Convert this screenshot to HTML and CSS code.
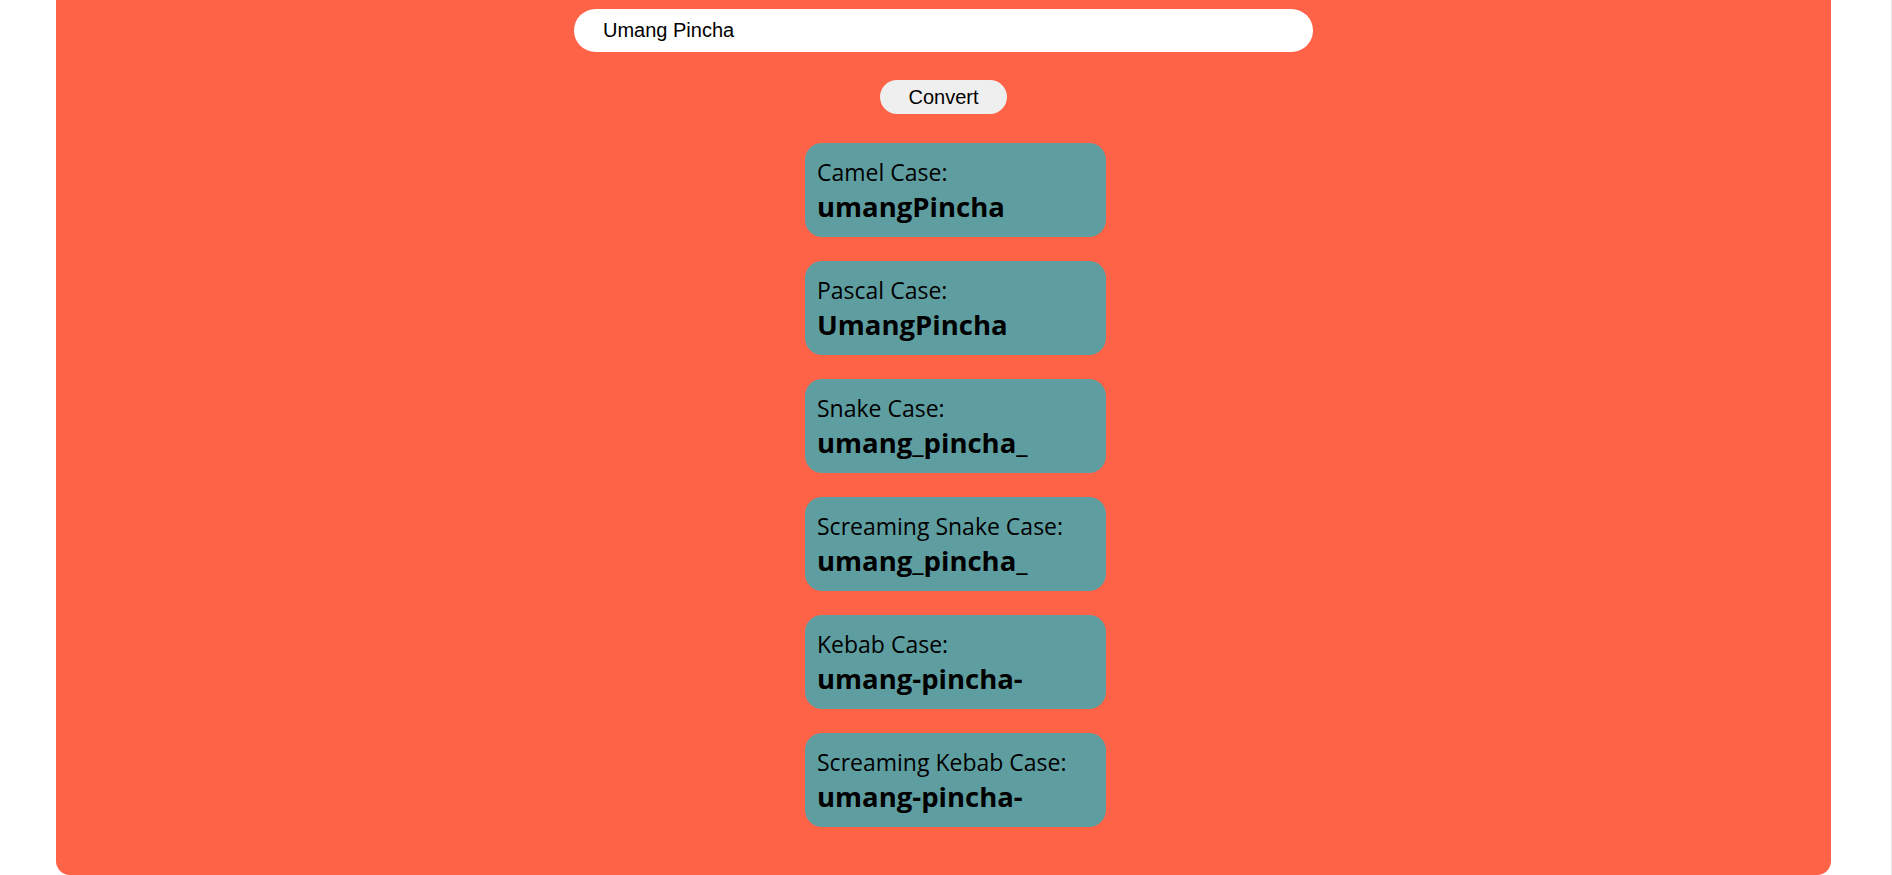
FILE: index.html
```html
<!DOCTYPE html>
<html lang="en">
<head>
<meta charset="utf-8">
<title>Case Converter</title>
<link rel="stylesheet" href="styles.css">
</head>
<body>
<main class="panel">
  <input class="text-input" type="text" value="Umang Pincha">
  <button class="convert-btn" type="button">Convert</button>
  <section class="results">
    <div class="card"><div class="label">Camel Case:</div><div class="value">umangPincha</div></div>
    <div class="card"><div class="label">Pascal Case:</div><div class="value">UmangPincha</div></div>
    <div class="card"><div class="label">Snake Case:</div><div class="value">umang_pincha_</div></div>
    <div class="card"><div class="label">Screaming Snake Case:</div><div class="value">umang_pincha_</div></div>
    <div class="card"><div class="label">Kebab Case:</div><div class="value">umang-pincha-</div></div>
    <div class="card"><div class="label">Screaming Kebab Case:</div><div class="value">umang-pincha-</div></div>
  </section>
</main>
</body>
</html>
```
FILE: styles.css
```css
html, body {
  margin: 0;
  padding: 0;
  background: #ffffff;
}
body {
  min-height: 875px;
  box-shadow: inset -1px 0 0 #e6e6e6;
}
.panel {
  box-sizing: border-box;
  width: 1775px;
  height: 875px;
  margin-left: 56px;
  background: #ff6347;
  border-radius: 0 0 14px 14px;
  padding-top: 9px;
  display: flex;
  flex-direction: column;
  align-items: center;
}
.text-input {
  box-sizing: border-box;
  width: 739px;
  height: 43px;
  border: none;
  outline: none;
  border-radius: 22px;
  background: #ffffff;
  padding: 0 0 0 29px;
  font-family: "Liberation Sans", Arial, sans-serif;
  font-size: 20px;
  color: #000;
}
.convert-btn {
  box-sizing: border-box;
  margin-top: 28px;
  width: 127px;
  height: 34px;
  border: none;
  border-radius: 17px;
  background: #efefef;
  font-family: "Liberation Sans", Arial, sans-serif;
  font-size: 20px;
  color: #000;
  padding: 0;
}
.results {
  margin-top: 29px;
  margin-left: 24px;
  display: flex;
  flex-direction: column;
  gap: 24px;
}
.card {
  box-sizing: border-box;
  width: 301px;
  height: 94px;
  background: #5f9ea0;
  border-radius: 17px;
  padding: 14px 12px 0 12px;
  font-family: "Open Sans", "Noto Sans", sans-serif;
  color: #000;
}
.label {
  font-size: 23px;
  line-height: 30px;
}
.value {
  margin-top: 2px;
  font-size: 27.5px;
  line-height: 36px;
  font-weight: 700;
}
```
